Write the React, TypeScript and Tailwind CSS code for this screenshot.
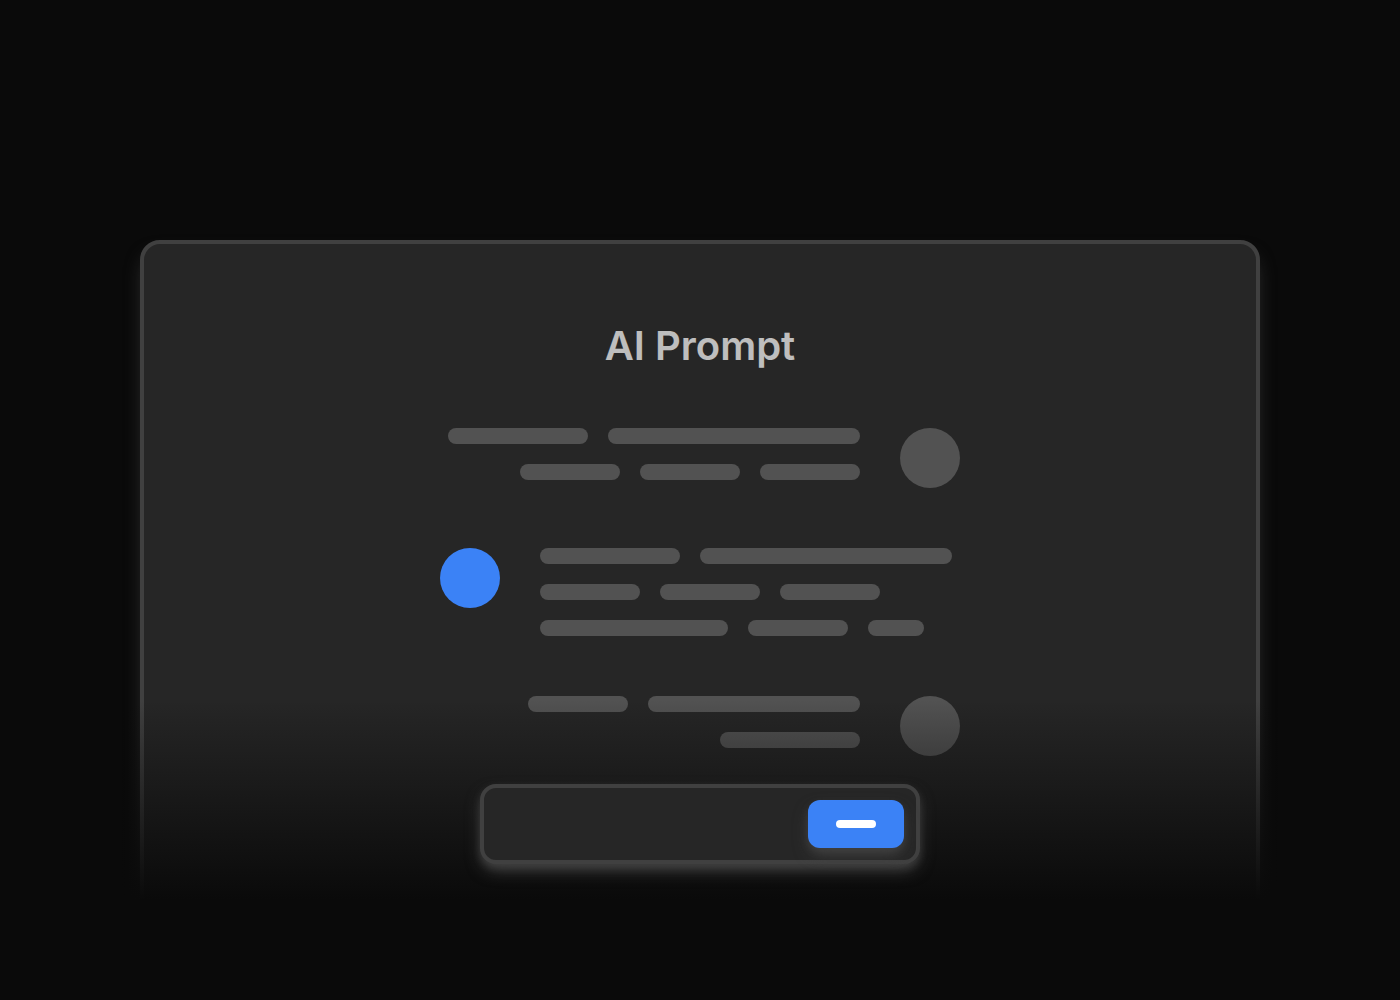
import React from "react";

type Message = { from: "user" | "assistant"; lines: string[][] };

const messages: Message[] = [
  {
    from: "user",
    lines: [
      ["w-[140px]", "w-[252px]"],
      ["w-[100px]", "w-[100px]", "w-[100px]"],
    ],
  },
  {
    from: "assistant",
    lines: [
      ["w-[140px]", "w-[252px]"],
      ["w-[100px]", "w-[100px]", "w-[100px]"],
      ["w-[188px]", "w-[100px]", "w-[56px]"],
    ],
  },
  {
    from: "user",
    lines: [["w-[100px]", "w-[212px]"], ["w-[140px]"]],
  },
];

function MessageRow({ message }: { message: Message }) {
  const user = message.from === "user";
  return (
    <li className={user ? "flex flex-row-reverse gap-10" : "flex gap-10"}>
      <div
        className={
          user
            ? "size-[60px] shrink-0 rounded-full bg-[#525252]"
            : "size-[60px] shrink-0 rounded-full bg-[#3b82f6]"
        }
      />
      <div className={user ? "flex flex-col items-end gap-5" : "flex flex-col items-start gap-5"}>
        {message.lines.map((line, i) => (
          <div key={i} className="flex gap-5">
            {line.map((width, j) => (
              <div key={j} className={`h-4 rounded-full bg-[#525252] ${width}`} />
            ))}
          </div>
        ))}
      </div>
    </li>
  );
}

export default function App() {
  return (
    <main className="min-h-screen overflow-hidden bg-[#0a0a0a] px-[140px] pt-60 font-['Inter',sans-serif]">
      <section className="relative">
        <div className="flex flex-col items-center rounded-[20px] border-4 border-[#404040] bg-[#262626] pt-20 pb-20 shadow-[0_12px_20px_-6px_#404040]">
          <h1 className="text-[40px] leading-11 font-semibold text-white opacity-70">AI Prompt</h1>
          <ul className="mt-15 flex w-full max-w-[520px] flex-col gap-15">
            {messages.map((message, i) => (
              <MessageRow key={i} message={message} />
            ))}
          </ul>
          <form
            className="relative z-10 mt-7 flex h-20 w-full max-w-[440px] items-center rounded-2xl border-4 border-[#404040] bg-[#262626] pr-3 shadow-[0_8px_16px_-2px_#404040,0_4px_8px_-2px_#404040]"
            onSubmit={(e) => e.preventDefault()}
          >
            <input
              type="text"
              aria-label="Prompt"
              className="h-full min-w-0 flex-1 bg-transparent px-4 text-xl text-[#bdbdbd] outline-none"
            />
            <button
              type="submit"
              aria-label="Send"
              className="flex h-12 w-24 items-center justify-center rounded-xl bg-[#3b82f6] shadow-[0_8px_16px_-2px_#404040,0_4px_8px_-2px_#404040]"
            >
              <span className="h-2 w-10 rounded-full bg-white" />
            </button>
          </form>
        </div>
        <div className="pointer-events-none absolute -inset-x-10 top-[460px] -bottom-20 bg-[linear-gradient(to_bottom,transparent,#0a0a0a_200px)]" />
      </section>
    </main>
  );
}
